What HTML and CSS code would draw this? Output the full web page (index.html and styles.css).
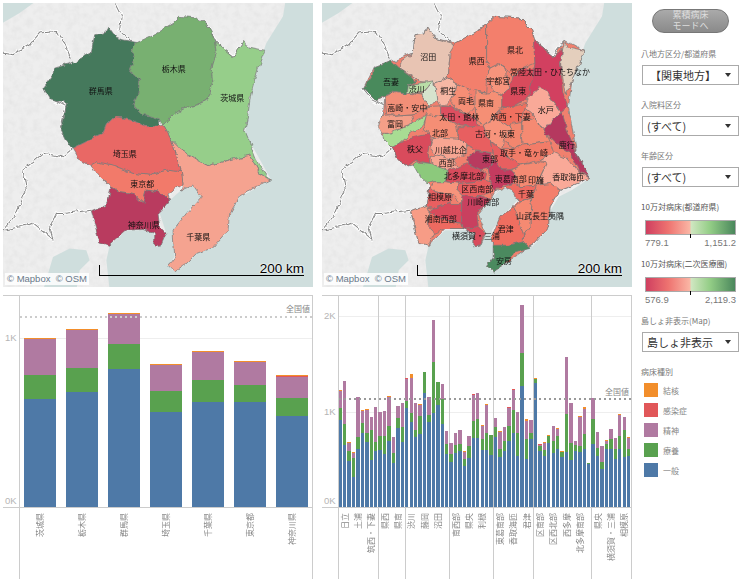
FILE: index.html
```html
<!DOCTYPE html>
<html lang="ja">
<head>
<meta charset="utf-8">
<title>関東地方 病床マップ</title>
<link rel="stylesheet" href="styles.css">
</head>
<body>
<div class="page">
  <section class="map">
    <svg class="map-svg" viewBox="10 10 930 850" preserveAspectRatio="none">
      <defs>
        <filter id="terrain" x="0" y="0" width="100%" height="100%">
          <feTurbulence type="fractalNoise" baseFrequency="0.05" numOctaves="3" seed="4"/>
          <feColorMatrix values="0 0 0 0 .65  0 0 0 0 .65  0 0 0 0 .65  .6 0 0 0 -.22"/>
          <feComposite in2="SourceGraphic" operator="in"/>
          <feMerge><feMergeNode in="SourceGraphic"/><feMergeNode/></feMerge>
        </filter>
        <filter id="rough" x="-5%" y="-5%" width="110%" height="110%">
          <feTurbulence type="fractalNoise" baseFrequency="0.045" numOctaves="3" seed="7" result="n"/>
          <feDisplacementMap in="SourceGraphic" in2="n" scale="16" xChannelSelector="R" yChannelSelector="G"/>
        </filter>
        <g id="base">
          <rect class="sea" x="0" y="0" width="960" height="870"/>
          <polygon class="land" points="115,0 858,0 850,50 800,130 775,200 750,300 745,350 735,400 770,460 812,535 760,570 720,590 690,640 685,690 640,740 590,760 560,790 525,815 505,795 525,770 520,690 560,640 605,590 580,555 545,570 510,600 480,640 500,700 470,740 460,690 380,690 330,735 320,780 330,870 230,870 240,810 270,780 260,750 210,745 160,770 130,870 0,870 0,75 60,40"/>
          <g class="halo">
            <polyline points="345,10 365,50 360,90 395,125"/>
            <polyline points="10,160 40,165 90,135 120,100 170,95 195,130 215,180"/>
            <polyline points="220,445 190,470 130,460 70,510 80,570 50,640 10,690"/>
            <polyline points="275,630 190,640 170,640 150,680 160,720 100,670 15,690"/>
            <polyline points="620,70 650,130 700,170 735,125"/>
            <polyline points="130,265 160,300 200,320 185,380"/>
          </g>
          <g class="bound">
            <polyline points="345,10 365,50 360,90 395,125"/>
            <polyline points="10,160 40,165 90,135 120,100 170,95 195,130 215,180"/>
            <polyline points="220,445 190,470 130,460 70,510 80,570 50,640 10,690"/>
            <polyline points="275,630 190,640 170,640 150,680 160,720 100,670 15,690"/>
            <polyline points="620,70 650,130 700,170 735,125"/>
            <polyline points="130,265 160,300 200,320 185,380"/>
          </g>
        </g>
      </defs>
      <use href="#base"/>
      <g class="regions">
        <polygon fill="#44795c" points="325,82 345,110 370,120 410,128 395,150 405,175 390,215 420,240 415,280 400,315 430,345 480,360 480,378 440,380 395,360 345,350 320,375 310,400 270,420 220,445 200,420 185,390 195,350 200,310 150,300 130,265 160,225 165,205 215,190 275,160 285,105 315,100"/>
        <polygon fill="#78b071" points="395,150 410,128 470,100 520,70 540,50 590,55 620,70 635,95 645,125 650,160 635,210 640,250 625,300 590,315 550,325 520,345 490,375 480,360 430,345 400,315 415,280 420,240 390,215 405,175"/>
        <polygon fill="#96ce8a" points="645,125 700,170 735,122 745,142 795,152 775,205 752,290 745,345 735,390 760,450 775,490 812,540 780,520 750,465 690,480 625,497 590,480 545,450 515,420 490,375 520,345 550,325 590,315 625,300 640,250 635,210 650,160"/>
        <polygon fill="#f5a390" points="515,420 545,450 590,480 625,497 690,480 750,465 780,520 812,540 760,565 720,590 690,640 685,690 640,740 590,760 560,790 525,815 505,795 525,770 520,690 560,640 605,590 580,555 545,570 550,550 545,515 530,465"/>
        <polygon fill="#f27a6a" points="270,497 290,485 340,495 400,520 450,525 500,510 545,515 550,550 530,565 505,585 510,600 470,575 440,570 430,610 400,580 360,575 335,560 325,555 300,530"/>
        <polygon fill="#e96765" points="345,350 395,360 440,380 480,378 490,375 515,420 530,465 545,515 500,510 450,525 400,520 340,495 290,485 270,497 240,480 220,445 270,420 310,400 320,375"/>
        <polygon fill="#b93a5e" points="335,560 360,575 400,580 430,610 440,570 470,575 510,600 490,625 475,640 480,680 500,700 490,715 480,738 465,738 465,700 430,688 380,690 330,735 300,725 290,690 275,635 320,615"/>
      </g>
      <g class="names">
        <text x="303" y="282">群馬県</text>
        <text x="522" y="218">栃木県</text>
        <text x="698" y="303">茨城県</text>
        <text x="375" y="470">埼玉県</text>
        <text x="428" y="561">東京都</text>
        <text x="432" y="684">神奈川県</text>
        <text x="596" y="719">千葉県</text>
      </g>
    </svg>
    <div class="credit">© Mapbox&nbsp; © OSM</div>
    <div class="scale">200 km</div>
  </section>

  <section class="map">
    <svg class="map-svg" viewBox="6 10 930 850" preserveAspectRatio="none">
      <use href="#base" x="-4"/>
      <g class="regions">
        <polygon fill="#f0806e" points="320,82 345,115 405,130 500,75 525,50 600,55 635,90 645,125 700,170 735,122 792,152 755,250 745,320 770,460 808,530 760,555 720,570 690,620 685,680 640,730 555,790 520,815 500,795 520,770 520,700 560,640 605,590 575,555 525,575 510,600 475,640 497,700 478,738 462,738 462,700 430,685 375,685 328,735 295,725 272,635 322,615 330,560 280,495 262,497 235,480 215,440 185,400 195,290 165,300 130,265 160,205 215,185 280,160 285,105 315,100"/>
        <polygon fill="#e8c4b3" points="320,82 345,115 395,130 405,145 388,190 385,235 345,250 300,245 236,205 245,185 280,160 285,105 315,100"/>
        <polygon fill="#4a8a5c" points="215,185 236,205 250,215 290,245 265,255 262,280 225,275 190,290 165,300 130,265 158,225 160,205"/>
        <polygon fill="#b9dda7" points="265,255 340,243 305,282 262,278"/>
        <polygon fill="#d6e3cd" points="340,243 350,280 350,305 325,320 305,285"/>
        <polygon fill="#f28f78" points="195,290 225,275 262,280 305,285 325,320 290,340 240,345 200,345"/>
        <polygon fill="#f49f88" points="185,350 240,345 275,345 280,370 250,380 220,400 185,400 175,380"/>
        <polygon fill="#a8dc93" points="320,345 310,375 270,400 220,445 195,420 190,405 250,385 285,365"/>
        <polygon fill="#d94b5c" points="215,440 270,415 335,400 330,440 325,465 330,490 285,480 262,497 235,480"/>
        <polygon fill="#8cc97c" points="285,485 330,490 385,510 380,545 340,545 320,550 300,530 280,495"/>
        <polygon fill="#f7b7a4" points="345,250 385,235 408,248 400,290 385,315 360,318 350,300"/>
        <polygon fill="#f58e74" points="408,250 440,265 465,320 440,345 405,322 395,310"/>
        <polygon fill="#dd5060" points="365,320 395,320 440,345 470,360 475,380 420,375 385,360 365,345"/>
        <polygon fill="#f58e74" points="325,320 360,318 365,350 320,345"/>
        <polygon fill="#f37f6c" points="390,155 405,130 500,75 500,180 510,205 500,235 497,280 440,265 408,248 385,235 388,190"/>
        <polygon fill="#f37f6c" points="500,75 525,50 600,55 635,90 645,125 645,190 605,208 575,232 555,205 530,195 510,205 500,180"/>
        <polygon fill="#f7947c" points="510,205 530,195 555,205 560,240 570,265 545,285 525,275 500,235"/>
        <polygon fill="#d94b5c" points="575,232 605,208 645,205 635,260 620,300 570,320 545,325 545,285 570,265"/>
        <polygon fill="#f58f74" points="465,275 497,280 525,275 545,285 545,320 520,350 490,375 470,360 465,320"/>
        <polygon fill="#d24160" points="640,122 700,170 728,148 722,195 728,280 745,320 722,335 690,290 660,260 625,300 635,250 645,190"/>
        <polygon fill="#e4cfbd" points="735,122 745,142 792,152 772,205 755,250 735,280 722,195 728,148"/>
        <polygon fill="#f9a998" points="660,260 690,290 722,335 700,355 685,395 660,380 645,350 615,325 625,295"/>
        <polygon fill="#b5395f" points="700,355 725,335 745,400 770,460 808,530 775,510 750,460 720,440 680,400 670,395"/>
        <polygon fill="#f0705f" points="545,325 570,320 620,310 615,325 605,365 575,385 545,365 520,352"/>
        <polygon fill="#f58a72" points="605,365 645,350 660,380 680,400 690,425 610,435 605,400"/>
        <polygon fill="#f2866e" points="575,370 605,365 605,435 580,445 550,420"/>
        <polygon fill="#f7947c" points="490,380 520,352 545,365 575,385 550,420 545,450 515,425 500,415"/>
        <polygon fill="#f27c68" points="550,445 580,445 610,435 690,425 700,455 660,480 600,495 570,475"/>
        <polygon fill="#f58e74" points="320,345 365,350 385,360 410,375 415,420 340,410 310,390"/>
        <polygon fill="#f7a592" points="340,410 415,415 440,435 440,460 400,480 350,465 330,440"/>
        <polygon fill="#e85f60" points="415,380 475,380 490,380 500,415 515,425 520,460 470,450 440,435 415,415"/>
        <polygon fill="#b93a5e" points="440,475 470,452 510,460 525,480 505,505 480,510 445,490"/>
        <polygon fill="#f7a592" points="330,470 350,465 400,480 415,500 395,515 340,495"/>
        <polygon fill="#d94b5c" points="385,510 415,500 445,490 480,510 500,520 495,540 420,550 380,545"/>
        <polygon fill="#e85f60" points="515,425 545,450 570,475 600,495 570,510 545,510 525,480 520,460"/>
        <polygon fill="#c43a5e" points="505,505 525,480 545,510 575,510 590,530 580,550 550,555 525,575 510,545"/>
        <polygon fill="#f58a72" points="575,510 600,495 660,485 680,490 660,530 650,555 600,560 590,530"/>
        <polygon fill="#f9a998" points="660,480 700,455 735,470 770,510 810,535 760,555 720,570 695,550 650,555 680,490"/>
        <polygon fill="#ee6b60" points="580,550 600,560 650,555 635,595 600,605 575,570 550,560"/>
        <polygon fill="#f37f6c" points="650,555 695,550 720,570 690,620 685,680 640,730 610,745 610,705 630,680 630,640 635,595"/>
        <polygon fill="#f58a72" points="600,605 635,595 630,640 630,680 610,705 590,640 580,620"/>
        <polygon fill="#ef6e60" points="580,620 590,640 610,705 610,725 565,735 525,740 515,710 540,650"/>
        <polygon fill="#4b8a5e" points="520,735 565,735 610,725 630,742 585,755 555,790 520,815 500,795 520,770"/>
        <polygon fill="#e85f60" points="420,550 495,540 510,545 510,580 480,590 430,590 410,570"/>
        <polygon fill="#f7947c" points="340,545 380,545 420,550 410,570 430,590 425,610 400,585 345,575 330,565"/>
        <polygon fill="#e85f60" points="330,560 345,575 395,585 390,610 340,625 322,620"/>
        <polygon fill="#d94b5c" points="340,625 390,610 425,610 425,670 360,655 330,635"/>
        <polygon fill="#c9405f" points="425,590 480,590 510,600 485,625 470,640 475,680 430,685 425,670"/>
        <polygon fill="#ee6b60" points="330,635 360,655 425,670 430,685 375,685 340,700 325,670"/>
        <polygon fill="#f79c86" points="272,635 322,615 330,635 325,670 340,700 328,735 295,725 285,685"/>
        <polygon fill="#d94b5c" points="430,685 475,680 497,700 485,715 478,738 462,738 462,700"/>
      </g>
      <g class="names">
        <text x="325" y="182">沼田</text><text x="213" y="256">吾妻</text><text x="290" y="276">渋川</text>
        <text x="385" y="282">桐生</text><text x="470" y="194">県西</text><text x="585" y="159">県北</text>
        <text x="535" y="251">宇都宮</text><text x="595" y="281">県東</text><text x="690" y="227">常陸太田・ひたちなか</text>
        <text x="438" y="312">両毛</text><text x="498" y="317">県南</text><text x="677" y="340">水戸</text>
        <text x="262" y="332">高崎・安中</text><text x="418" y="360">太田・館林</text><text x="572" y="360">筑西・下妻</text>
        <text x="225" y="381">富岡</text><text x="360" y="407">北部</text><text x="525" y="410">古河・坂東</text>
        <text x="740" y="444">鹿行</text><text x="285" y="457">秩父</text><text x="392" y="458">川越比企</text>
        <text x="612" y="467">取手・竜ヶ崎</text><text x="510" y="485">東部</text><text x="380" y="499">西部</text>
        <text x="432" y="537">北多摩北部</text><text x="572" y="545">東葛南部</text><text x="648" y="549">印旛</text>
        <text x="745" y="541">香取海匝</text><text x="472" y="575">区西南部</text><text x="618" y="591">千葉</text>
        <text x="360" y="601">相模原</text><text x="490" y="614">川崎南部</text><text x="660" y="657">山武長生夷隅</text>
        <text x="362" y="665">湘南西部</text><text x="557" y="695">君津</text><text x="468" y="717">横須賀・三浦</text>
        <text x="552" y="792">安房</text>
      </g>
    </svg>
    <div class="credit">© Mapbox&nbsp; © OSM</div>
    <div class="scale">200 km</div>
  </section>

  <aside class="side">
    <div class="mode">累積病床<br>モードへ</div>
    <div class="flabel first">八地方区分/都道府県</div>
    <div class="select"><span class="center">【関東地方】</span><i class="arrow"></i></div>
    <div class="flabel">入院料区分</div>
    <div class="select"><span>(すべて)</span><i class="arrow"></i></div>
    <div class="flabel">年齢区分</div>
    <div class="select"><span>(すべて)</span><i class="arrow"></i></div>
    <div class="slabel">10万対病床(都道府県)</div>
    <div class="ramp"></div>
    <div class="range"><span>779.1</span><span>1,151.2</span></div>
    <div class="slabel next">10万対病床(二次医療圏)</div>
    <div class="ramp"></div>
    <div class="range"><span>576.9</span><span>2,119.3</span></div>
    <div class="flabel next">島しょ非表示(Map)</div>
    <div class="select"><span>島しょ非表示</span><i class="arrow"></i></div>
    <div class="flabel">病床種別</div>
    <ul class="legend">
      <li><i class="sw o"></i>結核</li>
      <li><i class="sw r"></i>感染症</li>
      <li><i class="sw p"></i>精神</li>
      <li><i class="sw g"></i>療養</li>
      <li><i class="sw b"></i>一般</li>
    </ul>
  </aside>

  <section class="chart chart-a">
    <div class="yaxis"></div>
    <div class="cols">
      <div class="col"><div class="slot"><i class="b" style="height:108px"></i><i class="g" style="height:24px"></i><i class="p" style="height:36px"></i><i class="o" style="height:1px"></i></div><span class="tick">茨城県</span></div>
      <div class="col"><div class="slot"><i class="b" style="height:115px"></i><i class="g" style="height:24px"></i><i class="p" style="height:38px"></i><i class="o" style="height:1px"></i></div><span class="tick">栃木県</span></div>
      <div class="col"><div class="slot"><i class="b" style="height:138px"></i><i class="g" style="height:25px"></i><i class="p" style="height:30px"></i><i class="o" style="height:1px"></i></div><span class="tick">群馬県</span></div>
      <div class="col"><div class="slot"><i class="b" style="height:95px"></i><i class="g" style="height:21px"></i><i class="p" style="height:26px"></i><i class="o" style="height:1px"></i></div><span class="tick">埼玉県</span></div>
      <div class="col"><div class="slot"><i class="b" style="height:105px"></i><i class="g" style="height:22px"></i><i class="p" style="height:28px"></i><i class="o" style="height:1px"></i></div><span class="tick">千葉県</span></div>
      <div class="col"><div class="slot"><i class="b" style="height:105px"></i><i class="g" style="height:17px"></i><i class="p" style="height:23px"></i><i class="o" style="height:1px"></i></div><span class="tick">東京都</span></div>
      <div class="col"><div class="slot"><i class="b" style="height:91px"></i><i class="g" style="height:18px"></i><i class="p" style="height:21px"></i><i class="r" style="height:1px"></i><i class="o" style="height:1px"></i></div><span class="tick">神奈川県</span></div>
    </div>
    <span class="ylab a1k">1K</span><span class="ylab a0k">0K</span>
    <div class="grid a1k-line"></div>
    <div class="ref a-ref"></div>
    <span class="reflab a-reflab">全国値</span>
  </section>

  <section class="chart chart-b">
    <div class="yaxis"></div>
    <div class="groups">
      <div class="group">
        <div class="col"><div class="slot"><i class="b" style="height:87px"></i><i class="g" style="height:12px"></i><i class="p" style="height:17px"></i><i class="o" style="height:1px"></i></div></div>
        <div class="col"><div class="slot"><i class="b" style="height:62px"></i><i class="g" style="height:21px"></i><i class="p" style="height:43px"></i></div><span class="tick">日立</span></div>
        <div class="col"><div class="slot"><i class="b" style="height:46px"></i><i class="g" style="height:10px"></i><i class="p" style="height:8px"></i><i class="o" style="height:1px"></i></div></div>
        <div class="col"><div class="slot"><i class="b" style="height:30px"></i><i class="g" style="height:19px"></i><i class="p" style="height:5px"></i><i class="o" style="height:1px"></i></div></div>
        <div class="col"><div class="slot"><i class="b" style="height:58px"></i><i class="g" style="height:12px"></i><i class="p" style="height:40px"></i></div><span class="tick">土浦</span></div>
        <div class="col"><div class="slot"><i class="b" style="height:74px"></i><i class="g" style="height:10px"></i><i class="p" style="height:12px"></i><i class="o" style="height:1px"></i></div></div>
        <div class="col"><div class="slot"><i class="b" style="height:65px"></i><i class="g" style="height:9px"></i><i class="p" style="height:23px"></i><i class="o" style="height:1px"></i></div></div>
        <div class="col"><div class="slot"><i class="b" style="height:47px"></i><i class="g" style="height:30px"></i><i class="p" style="height:13px"></i></div><span class="tick">筑西・下妻</span></div>
        <div class="col"><div class="slot"><i class="b" style="height:56px"></i><i class="g" style="height:9px"></i><i class="p" style="height:35px"></i></div></div>
      </div>
      <div class="group">
        <div class="col"><div class="slot"><i class="b" style="height:57px"></i><i class="g" style="height:14px"></i><i class="p" style="height:24px"></i></div></div>
        <div class="col"><div class="slot"><i class="b" style="height:53px"></i><i class="g" style="height:18px"></i><i class="p" style="height:25px"></i></div><span class="tick">県西</span></div>
        <div class="col"><div class="slot"><i class="b" style="height:66px"></i><i class="g" style="height:15px"></i><i class="p" style="height:29px"></i><i class="o" style="height:1px"></i></div></div>
        <div class="col"><div class="slot"><i class="b" style="height:44px"></i><i class="g" style="height:10px"></i><i class="p" style="height:16px"></i></div></div>
        <div class="col"><div class="slot"><i class="b" style="height:79px"></i><i class="g" style="height:10px"></i><i class="p" style="height:12px"></i></div><span class="tick">県南</span></div>
        <div class="col"><div class="slot"><i class="b" style="height:65px"></i><i class="g" style="height:15px"></i><i class="p" style="height:24px"></i></div></div>
      </div>
      <div class="group">
        <div class="col"><div class="slot"><i class="b" style="height:99px"></i><i class="g" style="height:7px"></i><i class="p" style="height:22px"></i><i class="r" style="height:1px"></i></div></div>
        <div class="col"><div class="slot"><i class="b" style="height:85px"></i><i class="g" style="height:9px"></i><i class="p" style="height:35px"></i><i class="o" style="height:4px"></i></div><span class="tick">渋川</span></div>
        <div class="col"><div class="slot"><i class="b" style="height:70px"></i><i class="g" style="height:7px"></i><i class="p" style="height:27px"></i></div></div>
        <div class="col"><div class="slot"><i class="b" style="height:73px"></i><i class="g" style="height:18px"></i><i class="p" style="height:11px"></i><i class="o" style="height:1px"></i></div></div>
        <div class="col"><div class="slot"><i class="b" style="height:114px"></i><i class="g" style="height:21px"></i></div><span class="tick">藤岡</span></div>
        <div class="col"><div class="slot"><i class="b" style="height:85px"></i><i class="g" style="height:7px"></i><i class="p" style="height:18px"></i></div></div>
        <div class="col"><div class="slot"><i class="b" style="height:94px"></i><i class="g" style="height:51px"></i><i class="p" style="height:42px"></i></div></div>
        <div class="col"><div class="slot"><i class="b" style="height:102px"></i><i class="g" style="height:23px"></i></div><span class="tick">沼田</span></div>
        <div class="col"><div class="slot"><i class="b" style="height:83px"></i><i class="g" style="height:25px"></i><i class="p" style="height:15px"></i></div></div>
        <div class="col"><div class="slot"><i class="b" style="height:53px"></i><i class="g" style="height:10px"></i><i class="p" style="height:13px"></i></div></div>
      </div>
      <div class="group">
        <div class="col"><div class="slot"><i class="b" style="height:45px"></i><i class="g" style="height:8px"></i><i class="p" style="height:11px"></i></div></div>
        <div class="col"><div class="slot"><i class="b" style="height:54px"></i><i class="g" style="height:8px"></i><i class="p" style="height:12px"></i></div><span class="tick">南西部</span></div>
        <div class="col"><div class="slot"><i class="b" style="height:56px"></i><i class="g" style="height:7px"></i><i class="p" style="height:14px"></i></div></div>
        <div class="col"><div class="slot"><i class="b" style="height:41px"></i><i class="g" style="height:7px"></i><i class="p" style="height:7px"></i><i class="o" style="height:1px"></i></div></div>
        <div class="col"><div class="slot"><i class="b" style="height:49px"></i><i class="g" style="height:12px"></i><i class="p" style="height:10px"></i></div><span class="tick">県央</span></div>
        <div class="col"><div class="slot"><i class="b" style="height:69px"></i><i class="g" style="height:17px"></i><i class="p" style="height:26px"></i><i class="r" style="height:1px"></i></div></div>
        <div class="col"><div class="slot"><i class="b" style="height:69px"></i><i class="g" style="height:19px"></i><i class="p" style="height:26px"></i></div></div>
        <div class="col"><div class="slot"><i class="b" style="height:57px"></i><i class="g" style="height:11px"></i><i class="p" style="height:13px"></i><i class="o" style="height:1px"></i></div><span class="tick">利根</span></div>
        <div class="col"><div class="slot"><i class="b" style="height:57px"></i><i class="g" style="height:17px"></i><i class="p" style="height:28px"></i><i class="o" style="height:1px"></i></div></div>
        <div class="col"><div class="slot"><i class="b" style="height:52px"></i><i class="g" style="height:20px"></i></div></div>
      </div>
      <div class="group">
        <div class="col"><div class="slot"><i class="b" style="height:70px"></i><i class="g" style="height:10px"></i><i class="p" style="height:9px"></i></div></div>
        <div class="col"><div class="slot"><i class="b" style="height:50px"></i><i class="g" style="height:8px"></i><i class="p" style="height:17px"></i><i class="o" style="height:1px"></i></div><span class="tick">東葛南部</span></div>
        <div class="col"><div class="slot"><i class="b" style="height:56px"></i><i class="g" style="height:10px"></i><i class="p" style="height:14px"></i></div></div>
        <div class="col"><div class="slot"><i class="b" style="height:66px"></i><i class="g" style="height:15px"></i><i class="p" style="height:18px"></i><i class="r" style="height:1px"></i></div></div>
        <div class="col"><div class="slot"><i class="b" style="height:74px"></i><i class="g" style="height:23px"></i><i class="p" style="height:20px"></i><i class="r" style="height:1px"></i></div><span class="tick">香取海匝</span></div>
        <div class="col"><div class="slot"><i class="b" style="height:51px"></i><i class="g" style="height:23px"></i><i class="p" style="height:21px"></i></div></div>
        <div class="col"><div class="slot"><i class="b" style="height:121px"></i><i class="g" style="height:33px"></i><i class="p" style="height:48px"></i></div></div>
        <div class="col"><div class="slot"><i class="b" style="height:48px"></i><i class="g" style="height:20px"></i><i class="p" style="height:18px"></i><i class="o" style="height:2px"></i></div><span class="tick">君津</span></div>
        <div class="col"><div class="slot"><i class="b" style="height:68px"></i><i class="g" style="height:6px"></i><i class="p" style="height:13px"></i></div></div>
      </div>
      <div class="group">
        <div class="col"><div class="slot"><i class="b" style="height:124px"></i><i class="g" style="height:4px"></i><i class="o" style="height:1px"></i></div></div>
        <div class="col"><div class="slot"><i class="b" style="height:56px"></i><i class="g" style="height:5px"></i><i class="p" style="height:1px"></i><i class="r" style="height:1px"></i></div><span class="tick">区南部</span></div>
        <div class="col"><div class="slot"><i class="b" style="height:51px"></i><i class="g" style="height:6px"></i><i class="p" style="height:7px"></i><i class="o" style="height:1px"></i></div></div>
        <div class="col"><div class="slot"><i class="b" style="height:64px"></i><i class="g" style="height:7px"></i><i class="o" style="height:1px"></i></div></div>
        <div class="col"><div class="slot"><i class="b" style="height:54px"></i><i class="g" style="height:12px"></i><i class="p" style="height:15px"></i></div><span class="tick">区西北部</span></div>
        <div class="col"><div class="slot"><i class="b" style="height:58px"></i><i class="g" style="height:13px"></i><i class="p" style="height:7px"></i><i class="o" style="height:1px"></i></div></div>
        <div class="col"><div class="slot"><i class="b" style="height:50px"></i><i class="g" style="height:5px"></i><i class="o" style="height:1px"></i></div></div>
        <div class="col"><div class="slot"><i class="b" style="height:55px"></i><i class="g" style="height:38px"></i><i class="p" style="height:57px"></i></div><span class="tick">西多摩</span></div>
        <div class="col"><div class="slot"><i class="b" style="height:47px"></i><i class="g" style="height:17px"></i><i class="p" style="height:40px"></i></div></div>
        <div class="col"><div class="slot"><i class="b" style="height:56px"></i><i class="g" style="height:6px"></i><i class="p" style="height:4px"></i></div></div>
        <div class="col"><div class="slot"><i class="b" style="height:55px"></i><i class="g" style="height:6px"></i><i class="p" style="height:29px"></i><i class="o" style="height:1px"></i></div><span class="tick">北多摩南部</span></div>
        <div class="col"><div class="slot"><i class="b" style="height:58px"></i><i class="g" style="height:15px"></i><i class="p" style="height:25px"></i><i class="o" style="height:2px"></i></div></div>
        <div class="col"><div class="slot"><i class="b" style="height:43px"></i><i class="g" style="height:1px"></i></div></div>
      </div>
      <div class="group">
        <div class="col"><div class="slot"><i class="b" style="height:63px"></i><i class="g" style="height:25px"></i><i class="p" style="height:21px"></i></div></div>
        <div class="col"><div class="slot"><i class="b" style="height:51px"></i><i class="g" style="height:8px"></i><i class="p" style="height:16px"></i></div><span class="tick">県央</span></div>
        <div class="col"><div class="slot"><i class="b" style="height:38px"></i><i class="g" style="height:7px"></i><i class="p" style="height:16px"></i></div></div>
        <div class="col"><div class="slot"><i class="b" style="height:58px"></i><i class="g" style="height:5px"></i><i class="p" style="height:3px"></i><i class="o" style="height:1px"></i></div></div>
        <div class="col"><div class="slot"><i class="b" style="height:58px"></i><i class="g" style="height:10px"></i><i class="p" style="height:10px"></i></div><span class="tick">横須賀・三浦</span></div>
        <div class="col"><div class="slot"><i class="b" style="height:48px"></i><i class="g" style="height:10px"></i><i class="p" style="height:11px"></i></div></div>
        <div class="col"><div class="slot"><i class="b" style="height:58px"></i><i class="g" style="height:13px"></i><i class="p" style="height:21px"></i><i class="o" style="height:1px"></i></div></div>
        <div class="col"><div class="slot"><i class="b" style="height:50px"></i><i class="g" style="height:27px"></i><i class="p" style="height:13px"></i></div><span class="tick">相模原</span></div>
        <div class="col"><div class="slot"><i class="b" style="height:51px"></i><i class="g" style="height:7px"></i><i class="p" style="height:11px"></i><i class="o" style="height:1px"></i></div></div>
      </div>
    </div>
    <span class="ylab b2k">2K</span><span class="ylab b1k">1K</span><span class="ylab a0k">0K</span>
    <div class="grid b2k-line"></div>
    <div class="grid b1k-line"></div>
    <div class="ref b-ref"></div>
    <span class="reflab b-reflab">全国値</span>
  </section>
</div>
</body>
</html>
```

FILE: styles.css
```css
* { box-sizing: border-box; }
html, body { margin: 0; background: #fff; }
body { font-family: "Noto Sans CJK JP", "Liberation Sans", sans-serif; color: #555; overflow: hidden; }

.page {
  width: 741px;
  height: 582px;
  padding: 3px 0 0 3px;
  display: grid;
  grid-template-columns: 310px 310px 101px;
  grid-template-rows: 284px 284px;
  column-gap: 9px;
  row-gap: 8px;
}

/* maps */
.map { position: relative; width: 310px; height: 284px; outline: 1px solid #e3e3e3; outline-offset: -1px; overflow: hidden; }
.map-svg { display: block; width: 310px; height: 284px; filter: blur(.25px); }
.sea { fill: #cfdedd; }
.land { fill: #eeeeee; filter: url(#terrain); }
.halo { fill: none; stroke: #fff; stroke-width: 9; stroke-linejoin: round; filter: url(#rough); }
.bound { fill: none; stroke: #858585; stroke-width: 3; stroke-linejoin: round; filter: url(#rough); }
.regions { filter: url(#rough); }
.regions polygon { stroke: #787878; stroke-width: 2.2; stroke-linejoin: round; }
.names text { font-size: 24px; fill: #111; text-anchor: middle; }
.credit {
  position: absolute; left: 2px; bottom: 2px; height: 12px; padding: 0 2px;
  background: rgba(255,255,255,.85);
  font: 9.5px/12px "Liberation Sans", sans-serif; color: #69788a; white-space: nowrap;
}
.scale {
  position: absolute; left: 96px; bottom: 11px; width: 205px; height: 11px;
  border-left: 1px solid #000; border-bottom: 1px solid #000;
  display: flex; justify-content: flex-end; align-items: flex-end;
  font: 13.5px/13px "Liberation Sans", sans-serif; color: #000;
  text-shadow: 0 0 2px #fff, 0 0 2px #fff;
}
.map:nth-child(2) .scale { left: 95px; }

/* sidebar */
.side { grid-column: 3; grid-row: 1 / 3; padding-top: 6px; }
.mode {
  width: 77px; height: 24px; margin-left: 11px;
  border-radius: 12px; border: 1px solid #777;
  background: linear-gradient(#aaa, #8a8a8a);
  color: #ddd; font-family: "Liberation Sans", "Noto Sans CJK JP", sans-serif; font-size: 9px; line-height: 11px; text-align: center;
}
.flabel, .slabel { height: 12px; margin-top: 14px; margin-bottom: 5px; font-size: 8px; line-height: 12px; color: #777; white-space: nowrap; }
.flabel.first { margin-top: 15px; }
.flabel.next, .slabel.next { margin-top: 10px; }
.slabel { margin-bottom: 7px; color: #555; }
.select {
  width: 97px; height: 20px; margin-left: 1px; padding: 0 7px 0 4px;
  border: 1px solid #aaa;
  display: flex; align-items: center; justify-content: space-between;
  font-size: 11px; color: #333; background: #fff; white-space: nowrap;
}
.select .center { margin-left: 3px; }
.arrow { width: 0; height: 0; border-left: 3px solid transparent; border-right: 3px solid transparent; border-top: 4px solid #333; flex: none; }
.ramp {
  position: relative; width: 91px; height: 15px; margin-left: 4px;
  border: 1px solid #aaa;
  background: linear-gradient(90deg, #cf3f60 0%, #ee7370 25%, #fab5a4 49%, #cfe6c0 51%, #93cd86 72%, #4a875c 100%);
}
.ramp::after { content: ""; position: absolute; left: 44px; bottom: -4px; width: 1px; height: 4px; background: #000; }
.range { width: 91px; height: 11px; margin: 2px 0 0 4px; display: flex; justify-content: space-between; font: 9.5px/11px "Liberation Sans", sans-serif; color: #777; }
.legend { list-style: none; margin: 0; padding: 0 0 0 3px; display: flex; flex-direction: column; gap: 6px; }
.legend li { height: 14px; display: flex; align-items: center; gap: 5px; font-size: 8px; color: #888; }
.sw { width: 14px; height: 14px; flex: none; }

/* colours */
.b { background: #4e79a7; }
.g { background: #59a14f; }
.p { background: #b07aa1; }
.r { background: #e15759; }
.o { background: #f28e2b; }

/* charts */
.chart { position: relative; isolation: isolate; width: 310px; height: 284px; border-top: 1px solid #ccc; border-right: 1px solid #ccc; display: flex; }
.chart-a { grid-column: 1; grid-row: 2; }
.chart-b { grid-column: 2; grid-row: 2; }
.yaxis { width: 16px; height: 212px; border-bottom: 1px solid #ccc; flex: none; }
.cols, .groups { display: flex; }
.cols { box-shadow: inset 1px 0 0 #ccc; }
.group { display: flex; box-shadow: inset 1px 0 0 #ccc; height: 100%; }
.col { display: flex; flex-direction: column; align-items: center; }
.chart-a .col { width: 42px; }
.chart-b .col { width: 4.44px; }
.slot { height: 212px; width: 100%; display: flex; flex-direction: column-reverse; align-items: center; border-bottom: 1px solid #ccc; flex: none; }
.slot i { display: block; flex: none; }
.chart-a .slot i { width: 32px; }
.chart-b .slot i { width: 3.4px; }
.tick {
  margin-top: 5px; font-size: 8px; line-height: 10px; color: #888; white-space: nowrap;
  writing-mode: vertical-rl; text-orientation: sideways; transform: rotate(180deg);
}
.chart-b .tick { width: 10px; flex: none; }
.ylab { position: absolute; left: 2px; font: 9.5px/10px "Liberation Sans", sans-serif; color: #b5b5b5; }
.a1k { top: 37px; }
.a0k { top: 200px; }
.b2k { top: 15px; }
.b1k { top: 111px; }
.grid { position: absolute; z-index: -1; left: 16px; right: 0; height: 1px; background: #eee; }
.a1k-line { top: 42px; }
.b2k-line { top: 20px; }
.b1k-line { top: 116px; }
.ref { position: absolute; left: 17px; right: 0; height: 2px; background: repeating-linear-gradient(90deg, #ccc 0 2px, transparent 2px 5px); }
.chart-b .ref { background: repeating-linear-gradient(90deg, #999 0 2px, transparent 2px 5px); }
.a-ref { top: 20px; }
.b-ref { top: 102px; }
.reflab { position: absolute; right: 2px; font-size: 8px; line-height: 10px; color: #888; }
.a-reflab { top: 8px; }
.b-reflab { top: 91px; }
```
